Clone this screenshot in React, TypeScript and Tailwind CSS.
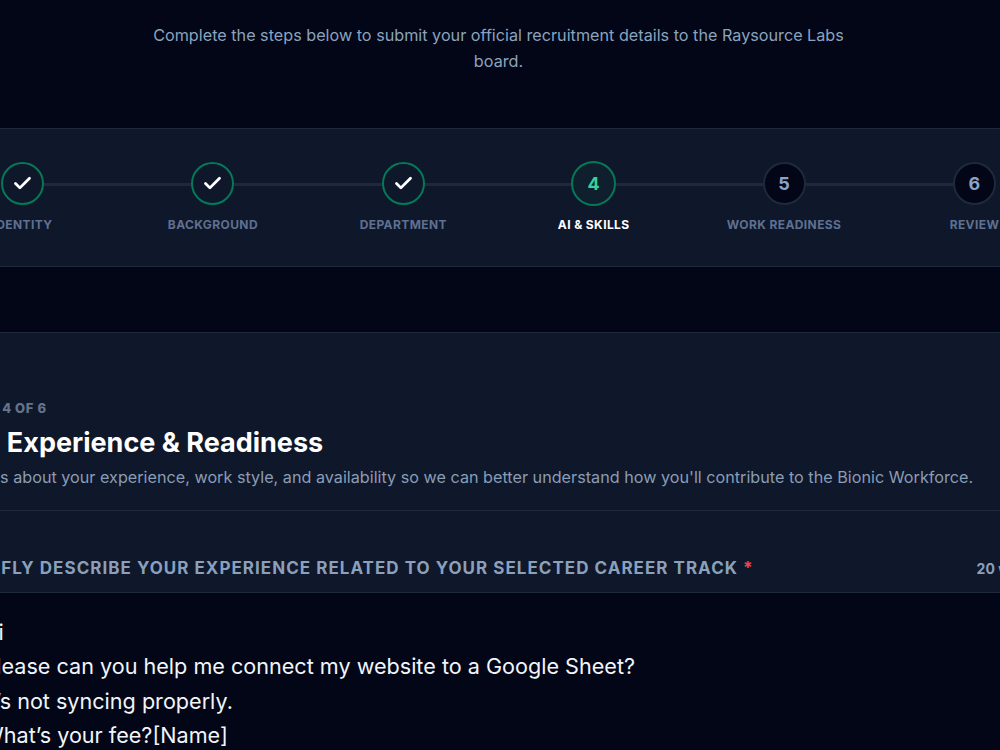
import { Check } from 'lucide-react';

const steps = [
  { label: 'IDENTITY', state: 'done' },
  { label: 'BACKGROUND', state: 'done' },
  { label: 'DEPARTMENT', state: 'done' },
  { label: 'AI & SKILLS', state: 'active', n: 4 },
  { label: 'WORK READINESS', state: 'todo', n: 5 },
  { label: 'REVIEW', state: 'todo', n: 6 },
];

function StepItem({ step }: { step: (typeof steps)[number] }) {
  return (
    <div className="flex w-[190.4px] shrink-0 flex-col items-center">
      <div className="flex h-[45px] items-center">
        {step.state === 'done' && (
          <div className="flex h-[43px] w-[43px] items-center justify-center rounded-full border-2 border-[#047857] bg-[#0f172a]">
            <Check className="h-[21px] w-[21px] text-white" strokeWidth={3.2} />
          </div>
        )}
        {step.state === 'active' && (
          <div className="flex h-[45px] w-[45px] items-center justify-center rounded-full border-2 border-[#047857] bg-[#0f1f2d] text-[18px] font-bold text-[#34d399]">
            {step.n}
          </div>
        )}
        {step.state === 'todo' && (
          <div className="flex h-[43px] w-[43px] items-center justify-center rounded-full border-2 border-[#1e293b] bg-[#020617] text-[18px] font-bold text-[#8aa4c8]">
            {step.n}
          </div>
        )}
      </div>
      <div
        className={`mt-[10px] whitespace-nowrap text-[12px] font-bold leading-[18px] tracking-[0.4px] ${
          step.state === 'active' ? 'text-white' : 'text-[#5f7090]'
        }`}
      >
        {step.label}
      </div>
    </div>
  );
}

export default function App() {
  return (
    <div className="h-[750px] w-[1000px] overflow-hidden bg-[#020617] font-['Inter',sans-serif]">
      <div className="ml-[-77.5px] w-[1152px]">
        <p className="mx-auto w-[720px] pt-[22px] text-center text-[16.2px] leading-[26px] text-[#8ba3bd]">
          Complete the steps below to submit your official recruitment details to the Raysource Labs board.
        </p>

        <div className="mt-[54px] h-[139px] border-y border-[#1e293b] bg-[#0f172a] px-[4.8px] pt-[32px]">
          <div className="relative flex">
            <div className="absolute left-[95px] right-[95px] top-[22px] h-[3px] bg-[#1e293b]" />
            {steps.map((s) => (
              <div key={s.label} className="relative">
                <StepItem step={s} />
              </div>
            ))}
          </div>
        </div>

        <div className="mt-[65px] border-t border-[#1e293b] bg-[#0f172a]">
          <div className="border-b border-[#1e293b] px-[40px] pb-[21px] pt-[66px]">
            <div className="text-[13px] font-extrabold leading-[18px] tracking-[0.6px] text-[#64748b]">STEP 4 OF 6</div>
            <h2 className="ml-[2px] mt-[8px] whitespace-nowrap text-[27px] font-bold leading-[36px] text-white">AI, Experience &amp; Readiness</h2>
            <p className="ml-[-3px] mt-[4px] whitespace-nowrap text-[16.2px] leading-[24px] text-[#8a9db5]">
              Tell us about your experience, work style, and availability so we can better understand how you'll contribute to the Bionic Workforce.
            </p>
          </div>
          <div className="flex items-center justify-between border-b border-[#1e293b] pb-[12px] pl-[37px] pr-[34px] pt-[45px]">
            <div className="whitespace-nowrap text-[17px] font-bold leading-[24px] tracking-[1.03px] text-[#8aa0bb]">
              BRIEFLY DESCRIBE YOUR EXPERIENCE RELATED TO YOUR SELECTED CAREER TRACK <span className="text-[#ef4444]">*</span>
            </div>
            <div className="whitespace-nowrap text-[14px] font-bold text-[#8aa0bb]">20 words</div>
          </div>
          <div className="bg-[#020617] px-[60px] pt-[22px] text-[21.6px] leading-[34.4px] text-[#f1f5f9]">
            <div>Hi</div>
            <div>Please can you help me connect my website to a Google Sheet?</div>
            <div>It’s not syncing properly.</div>
            <div>What’s your fee?[Name]</div>
          </div>
        </div>
      </div>
    </div>
  );
}
